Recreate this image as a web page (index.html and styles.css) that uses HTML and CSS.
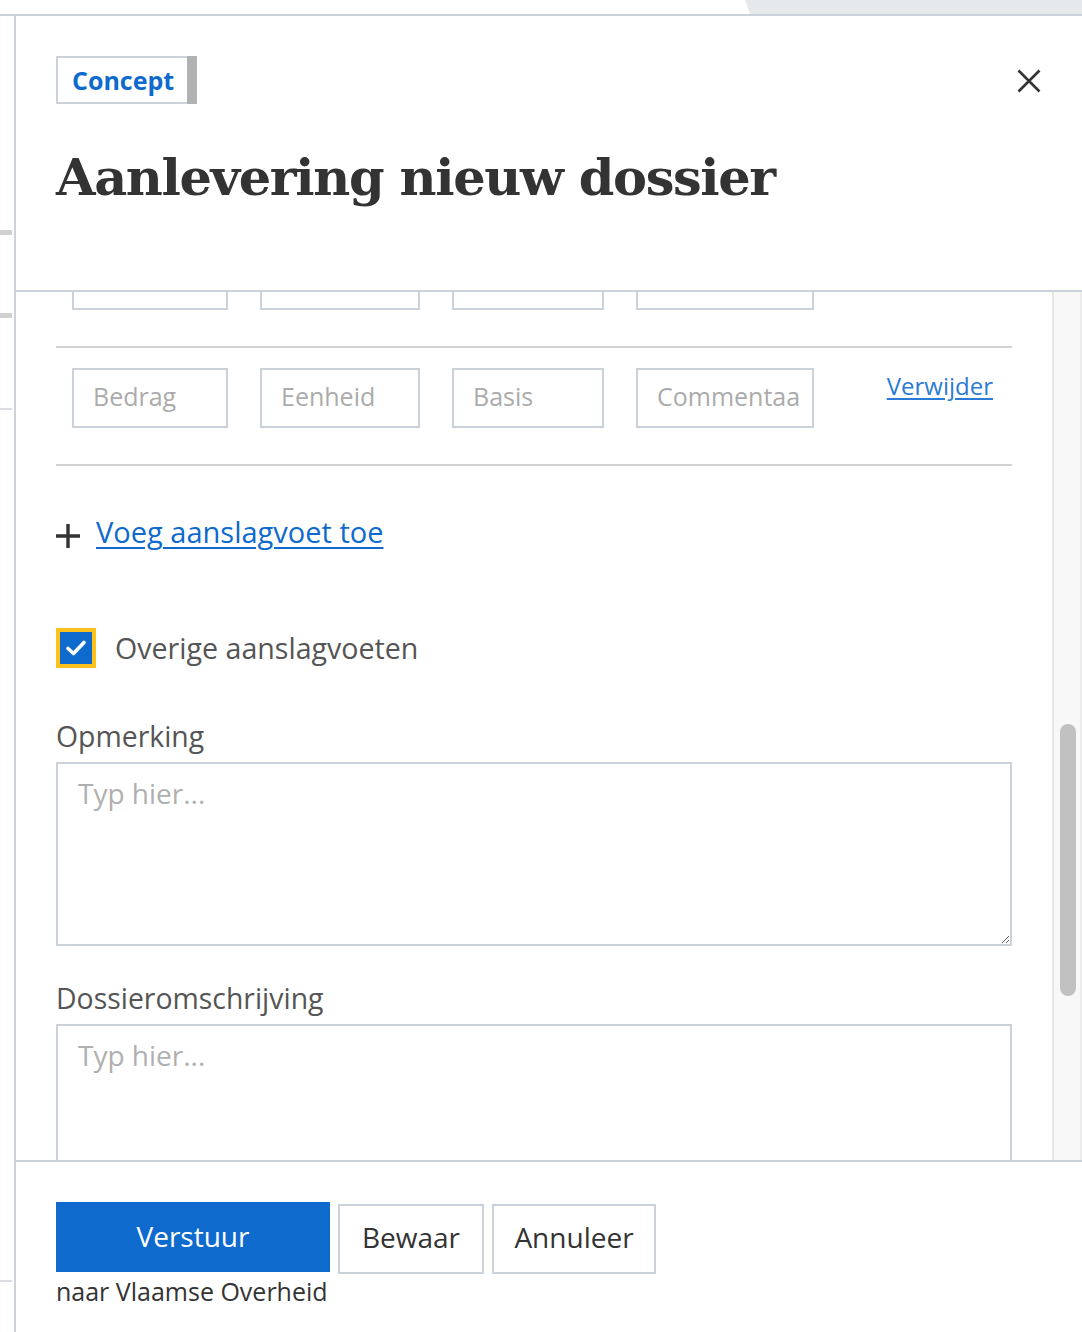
FILE: index.html
```html
<!DOCTYPE html>
<html lang="nl">
<head>
<meta charset="utf-8">
<title>Aanlevering nieuw dossier</title>
<link rel="stylesheet" href="styles.css">
</head>
<body>
<div class="topstrip"><div class="ts-white"></div><div class="ts-gray"></div></div>
<div class="main">
  <div class="leftstrip">
    <div class="mark mark1"></div>
    <div class="mark mark2"></div>
    <div class="thin thin1"></div>
    <div class="thin thin2"></div>
  </div>
  <div class="panel">
    <header class="ph">
      <div class="ph-left">
        <div class="badge"><span class="badge-text">Concept</span><span class="badge-bar"></span></div>
        <h1 class="title">Aanlevering nieuw dossier</h1>
      </div>
      <button class="close" aria-label="Sluiten">
        <svg width="24" height="24" viewBox="0 0 24 24"><path d="M1.5 1.5 L22.5 22.5 M22.5 1.5 L1.5 22.5" stroke="#333" stroke-width="2.6" fill="none"/></svg>
      </button>
    </header>
    <div class="pbody">
      <div class="content">
        <div class="inner">
          <div class="row">
            <input class="inp w1" type="text" placeholder="">
            <input class="inp w2" type="text" placeholder="">
            <input class="inp w3" type="text" placeholder="">
            <input class="inp w4" type="text" placeholder="">
          </div>
          <div class="row">
            <input class="inp w1" type="text" placeholder="Bedrag">
            <input class="inp w2" type="text" placeholder="Eenheid">
            <input class="inp w3" type="text" placeholder="Basis">
            <input class="inp w4" type="text" placeholder="Commentaar">
            <a class="del" href="#">Verwijder</a>
          </div>
          <div class="addrow">
            <svg class="plus" width="24" height="24" viewBox="0 0 24 24"><path d="M12 0 V24 M0 12 H24" stroke="#333" stroke-width="3.4" fill="none"/></svg>
            <a class="addlink" href="#">Voeg aanslagvoet toe</a>
          </div>
          <div class="checkrow">
            <span class="cb">
              <svg width="22" height="18" viewBox="0 0 22 18"><path d="M3 9.5 L8.5 14.5 L19 3.5" stroke="#fff" stroke-width="3.6" fill="none" stroke-linecap="round" stroke-linejoin="round"/></svg>
            </span>
            <span class="cb-label">Overige aanslagvoeten</span>
          </div>
          <label class="flabel lab1">Opmerking</label>
          <textarea class="ta ta1" placeholder="Typ hier..."></textarea>
          <label class="flabel lab2">Dossieromschrijving</label>
          <textarea class="ta ta2" placeholder="Typ hier..."></textarea>
        </div>
      </div>
      <div class="sbar"><div class="thumb"></div></div>
    </div>
    <footer class="pf">
      <div class="btns">
        <button class="btn primary">Verstuur</button>
        <button class="btn secondary b-bewaar">Bewaar</button>
        <button class="btn secondary b-annuleer">Annuleer</button>
      </div>
      <div class="note">naar Vlaamse Overheid</div>
    </footer>
  </div>
</div>
</body>
</html>
```
FILE: styles.css
```css
* { box-sizing: border-box; }
html, body { margin: 0; padding: 0; }
body {
  width: 1082px;
  height: 1332px;
  overflow: hidden;
  background: #fff;
  font-family: "Open Sans", "Noto Sans", sans-serif;
  color: #333;
}

.topstrip {
  height: 16px;
  display: flex;
  border-bottom: 2px solid #cbd2da;
}
.ts-white { width: 745px; flex: none; }
.ts-gray {
  flex: 1;
  background: #e6e9ec;
  clip-path: polygon(0 0, 100% 0, 100% 100%, 5px 100%);
}

.main { display: flex; height: 1316px; }
.leftstrip { width: 14px; flex: none; }
.mark { width: 12px; height: 5px; background: #d0d0d0; }
.mark1 { margin-top: 214px; }
.mark2 { margin-top: 78px; }
.thin { width: 12px; height: 2px; background: #dadde2; }
.thin1 { margin-top: 90px; }
.thin2 { margin-top: 870px; }

.panel {
  flex: 1;
  min-width: 0;
  border-left: 2px solid #cbd2da;
  display: flex;
  flex-direction: column;
}

.ph {
  height: 276px;
  flex: none;
  border-bottom: 2px solid #cbd2da;
  padding: 40px 41px 0 40px;
  display: flex;
  justify-content: space-between;
  align-items: flex-start;
}
.badge {
  display: inline-flex;
  height: 48px;
  border: 2px solid #cbd2da;
  border-right: none;
  align-items: center;
}
.badge-text {
  padding: 0 13px 0 14px;
  font-weight: 700;
  font-size: 25px;
  color: #0e6acd;
  line-height: 30px;
}
.badge-bar {
  width: 10px;
  align-self: stretch;
  margin: -2px 0;
  background: #b2b2b2;
}
.title {
  margin: 43px 0 0;
  font-family: "DejaVu Serif", serif;
  font-weight: 700;
  font-size: 51px;
  line-height: 60px;
  letter-spacing: -1.4px;
  color: #333;
}
.close {
  margin-top: 13px;
  padding: 0;
  border: none;
  background: none;
  width: 24px;
  height: 24px;
  display: block;
}
.close svg { display: block; }

.pbody {
  height: 868px;
  flex: none;
  display: flex;
  overflow: hidden;
}
.content {
  flex: 1;
  min-width: 0;
  overflow: hidden;
  padding: 0 40px 0 40px;
}
.inner { margin-top: -62px; }

.row {
  display: flex;
  align-items: flex-start;
  padding: 20px 19px 36px 16px;
  border-bottom: 2px solid #d2d2d2;
}
.inp {
  height: 60px;
  margin: 0 32px 0 0;
  border: 2px solid #cbd2da;
  padding: 0 10px 4px 19px;
  font-family: "Open Sans", sans-serif;
  font-size: 25px;
  color: #333;
  background: #fff;
  outline: none;
  border-radius: 0;
}
.inp::placeholder { color: #ababab; opacity: 1; }
.w1 { width: 156px; }
.w2 { width: 160px; }
.w3 { width: 152px; }
.w4 { width: 178px; }
.del {
  margin-left: auto;
  margin-top: 2px;
  font-size: 24px;
  line-height: 32px;
  color: #2b7bd6;
  text-decoration: underline;
  text-underline-offset: 3px;
}

.addrow {
  margin-top: 48px;
  display: flex;
  align-items: flex-start;
  gap: 16px;
}
.plus { display: block; margin-top: 10px; flex: none; }
.addlink {
  font-size: 29px;
  line-height: 36px;
  color: #0e6acd;
  text-decoration: underline;
  text-decoration-thickness: 2px;
  text-underline-offset: 4px;
}

.checkrow {
  margin-top: 78px;
  display: flex;
  align-items: center;
  gap: 19px;
}
.cb {
  width: 40px;
  height: 40px;
  flex: none;
  border: 4px solid #fcc21b;
  background: #0e6acd;
  display: flex;
  align-items: center;
  justify-content: center;
}
.cb svg { display: block; }
.cb-label {
  font-size: 28.6px;
  line-height: 36px;
  color: #555;
}

.flabel {
  display: block;
  font-size: 28.4px;
  line-height: 36px;
  color: #555;
  margin-bottom: 8px;
}
.lab1 { margin-top: 50px; }
.lab2 { margin-top: 34px; }
.ta {
  display: block;
  width: 100%;
  height: 184px;
  margin: 0;
  border: 2px solid #cbd2da;
  padding: 11px 20px;
  font-family: "Open Sans", sans-serif;
  font-size: 28px;
  line-height: 36px;
  color: #333;
  background: #fff;
  outline: none;
  border-radius: 0;
}
.ta::placeholder { color: #b0b0b0; opacity: 1; }

.sbar {
  width: 30px;
  flex: none;
  background: #f8f8f8;
  border-left: 2px solid #e6e6e6;
  border-right: 2px solid #ececec;
  padding: 432px 0 0 6px;
}
.thumb {
  width: 16px;
  height: 272px;
  border-radius: 8px;
  background: #c1c1c1;
}

.pf {
  flex: 1;
  border-top: 2px solid #cbd2da;
  padding: 40px 40px 0 40px;
}
.btns { display: flex; align-items: flex-start; }
.btn {
  height: 70px;
  margin: 0;
  padding: 0;
  font-family: "Open Sans", sans-serif;
  font-size: 28px;
  border-radius: 0;
  cursor: pointer;
}
.primary {
  width: 274px;
  border: none;
  background: #0e6acd;
  color: #fff;
  padding-bottom: 2px;
}
.secondary {
  margin-top: 2px;
  margin-left: 8px;
  border: 2px solid #cbd2da;
  background: #fff;
  color: #333;
  padding-bottom: 4px;
}
.b-bewaar { width: 146px; }
.b-annuleer { width: 164px; }
.note {
  margin-top: 2px;
  font-size: 25px;
  line-height: 30px;
  color: #333;
}
```
